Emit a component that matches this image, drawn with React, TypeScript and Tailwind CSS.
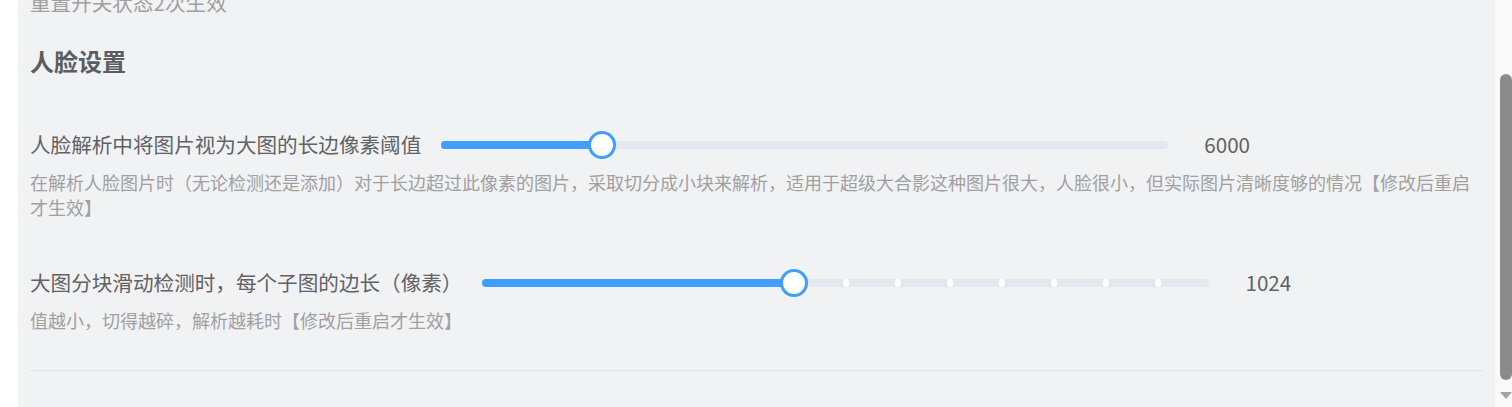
import React from 'react';

const FONT = { fontFamily: '"Noto Sans CJK SC", "Noto Sans", sans-serif' };

type SliderProps = { value: number; steps?: number };

// value is 0..1 along the runway
const Slider = ({ value, steps }: SliderProps) => {
  const stops: number[] = [];
  if (steps) {
    for (let i = 1; i < steps; i++) {
      if (i / steps > value) stops.push(i / steps);
    }
  }
  return (
    <div className="relative h-2 w-[727px] shrink-0 rounded-full bg-[#e4e7ed]">
      <div className="absolute left-0 top-0 h-full rounded-full bg-[#409eff]" style={{ width: `${value * 100}%` }} />
      {stops.map((s) => (
        <div
          key={s}
          className="absolute top-0 h-full w-[6px] -translate-x-1/2 rounded-full bg-white"
          style={{ left: `${s * 100}%` }}
        />
      ))}
      <div
        className="absolute top-1/2 size-[28px] -translate-x-1/2 -translate-y-1/2 rounded-full border-[3px] border-[#409eff] bg-white"
        style={{ left: `${value * 100}%` }}
      />
    </div>
  );
};

type RowProps = { label: string; value: string; pct: number; steps?: number; desc: string };

const SettingRow = ({ label, value, pct, steps, desc }: RowProps) => (
  <div>
    <div className="flex h-[31px] items-center">
      <span className="text-[20.6px] leading-[31px] text-[#606266]">{label}</span>
      <div className="ml-5">
        <Slider value={pct} steps={steps} />
      </div>
      <span className="ml-9 text-[20.6px] leading-[31px] text-[#606266]">{value}</span>
    </div>
    <p className="mt-[10px] text-[18px] leading-[25px] text-[#a0a0a0]">{desc}</p>
  </div>
);

export default function App() {
  return (
    <div className="flex h-[407px] w-full overflow-hidden bg-white" style={FONT}>
      <div className="w-[18px] shrink-0 bg-white" />

      <div className="flex-1 bg-[#f1f2f4] px-3">
        <div className="-mt-[13px]">
          <p className="text-[20.6px] leading-[31px] text-[#a0a0a0]">重置开关状态2次生效</p>

          <h2 className="mt-[25px] text-[24px] font-bold leading-[36px] text-[#5c5d60]">人脸设置</h2>

          <div className="mt-[50px]">
            <SettingRow
              label="人脸解析中将图片视为大图的长边像素阈值"
              value="6000"
              pct={0.221}
              desc="在解析人脸图片时（无论检测还是添加）对于长边超过此像素的图片，采取切分成小块来解析，适用于超级大合影这种图片很大，人脸很小，但实际图片清晰度够的情况【修改后重启才生效】"
            />
          </div>

          <div className="mt-[47px]">
            <SettingRow
              label="大图分块滑动检测时，每个子图的边长（像素）"
              value="1024"
              pct={6 / 14}
              steps={14}
              desc="值越小，切得越碎，解析越耗时【修改后重启才生效】"
            />
          </div>

          <div className="mt-[37px] h-px bg-[#dfe1e6]" />
        </div>
      </div>

      {/* scrollbar */}
      <div className="relative w-[17px] shrink-0 bg-[#fafafa]">
        <div className="absolute right-0 top-[74px] h-[306px] w-[12px] rounded-full bg-[#8b8b8b]" />
        <svg className="absolute bottom-[8px] right-0" width="12" height="7" viewBox="0 0 12 7">
          <path d="M0 0 L12 0 L6 7 Z" fill="#a3a3a3" />
        </svg>
      </div>
    </div>
  );
}
